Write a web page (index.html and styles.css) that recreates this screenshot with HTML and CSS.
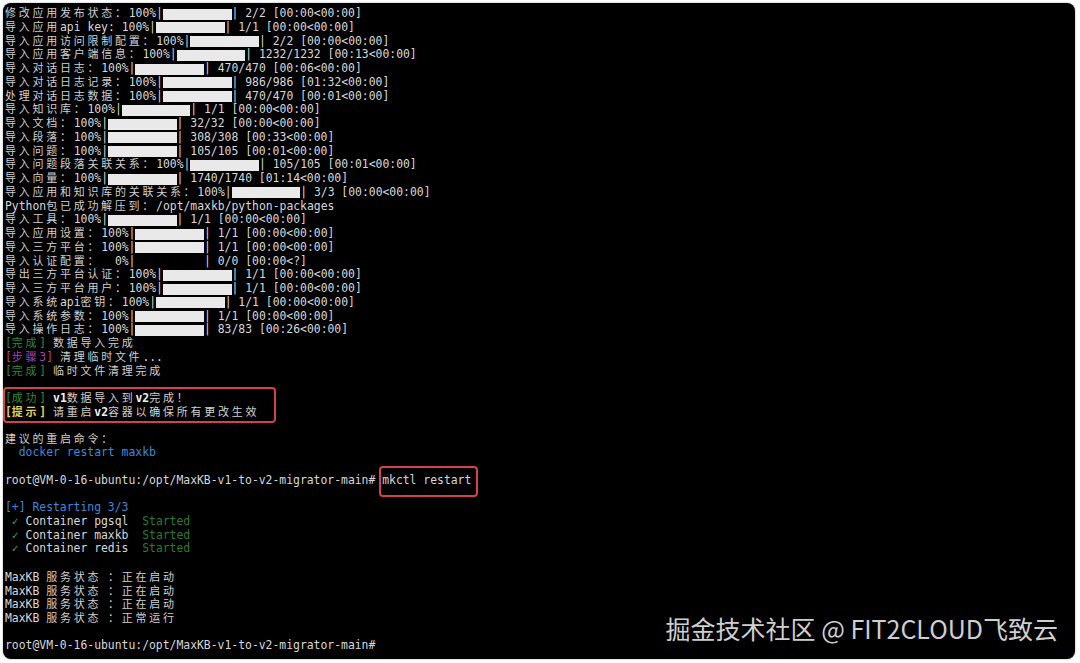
FILE: index.html
```html
<!DOCTYPE html>
<html lang="zh-CN">
<head>
    <meta charset="UTF-8">
    <meta name="viewport" content="width=device-width, initial-scale=1.0">
    <title>MaxKB v1 to v2 migrator</title>
    <link rel="stylesheet" href="styles.css">
</head>
<body>
    <div class="term">
        <div class="l"><span class="c">修改应用发布状态：</span>100%|<span class="bar"></span>| 2/2 [00:00&lt;00:00]</div>
        <div class="l"><span class="c">导入应用</span>api key: 100%|<span class="bar"></span>| 1/1 [00:00&lt;00:00]</div>
        <div class="l"><span class="c">导入应用访问限制配置：</span>100%|<span class="bar"></span>| 2/2 [00:00&lt;00:00]</div>
        <div class="l"><span class="c">导入应用客户端信息：</span>100%|<span class="bar"></span>| 1232/1232 [00:13&lt;00:00]</div>
        <div class="l"><span class="c">导入对话日志：</span>100%|<span class="bar"></span>| 470/470 [00:06&lt;00:00]</div>
        <div class="l"><span class="c">导入对话日志记录：</span>100%|<span class="bar"></span>| 986/986 [01:32&lt;00:00]</div>
        <div class="l"><span class="c">处理对话日志数据：</span>100%|<span class="bar"></span>| 470/470 [00:01&lt;00:00]</div>
        <div class="l"><span class="c">导入知识库：</span>100%|<span class="bar"></span>| 1/1 [00:00&lt;00:00]</div>
        <div class="l"><span class="c">导入文档：</span>100%|<span class="bar"></span>| 32/32 [00:00&lt;00:00]</div>
        <div class="l"><span class="c">导入段落：</span>100%|<span class="bar"></span>| 308/308 [00:33&lt;00:00]</div>
        <div class="l"><span class="c">导入问题：</span>100%|<span class="bar"></span>| 105/105 [00:01&lt;00:00]</div>
        <div class="l"><span class="c">导入问题段落关联关系：</span>100%|<span class="bar"></span>| 105/105 [00:01&lt;00:00]</div>
        <div class="l"><span class="c">导入向量：</span>100%|<span class="bar"></span>| 1740/1740 [01:14&lt;00:00]</div>
        <div class="l"><span class="c">导入应用和知识库的关联关系：</span>100%|<span class="bar"></span>| 3/3 [00:00&lt;00:00]</div>
        <div class="l">Python<span class="c">包已成功解压到：</span>/opt/maxkb/python-packages</div>
        <div class="l"><span class="c">导入工具：</span>100%|<span class="bar"></span>| 1/1 [00:00&lt;00:00]</div>
        <div class="l"><span class="c">导入应用设置：</span>100%|<span class="bar"></span>| 1/1 [00:00&lt;00:00]</div>
        <div class="l"><span class="c">导入三方平台：</span>100%|<span class="bar"></span>| 1/1 [00:00&lt;00:00]</div>
        <div class="l"><span class="c">导入认证配置：</span>  0%|<span class="bar empty"></span>| 0/0 [00:00&lt;?]</div>
        <div class="l"><span class="c">导出三方平台认证：</span>100%|<span class="bar"></span>| 1/1 [00:00&lt;00:00]</div>
        <div class="l"><span class="c">导入三方平台用户：</span>100%|<span class="bar"></span>| 1/1 [00:00&lt;00:00]</div>
        <div class="l"><span class="c">导入系统</span>api<span class="c">密钥：</span>100%|<span class="bar"></span>| 1/1 [00:00&lt;00:00]</div>
        <div class="l"><span class="c">导入系统参数：</span>100%|<span class="bar"></span>| 1/1 [00:00&lt;00:00]</div>
        <div class="l"><span class="c">导入操作日志：</span>100%|<span class="bar"></span>| 83/83 [00:26&lt;00:00]</div>
        <div class="l"><span class="ok">[<span class="c">完成</span>]</span> <span class="c">数据导入完成</span></div>
        <div class="l"><span class="step">[<span class="c">步骤</span>3]</span> <span class="c">清理临时文件</span>...</div>
        <div class="l"><span class="ok">[<span class="c">完成</span>]</span> <span class="c">临时文件清理完成</span></div>
        <div class="l"></div>

        <!-- highlighted result -->
        <div class="hl">
            <div class="l"><span class="ok">[<span class="c">成功</span>]</span> <b>v1</b><span class="c">数据导入到</span><b>v2</b><span class="c">完成！</span></div>
            <div class="l"><span class="tip">[<span class="c">提示</span>]</span> <span class="c">请重启</span><b>v2</b><span class="c">容器以确保所有更改生效</span></div>
        </div>

        <div class="l"></div>
        <div class="l"><span class="c">建议的重启命令：</span></div>
        <div class="l">  <span class="blue">docker restart maxkb</span></div>
        <div class="l"></div>
        <div class="l">root@VM-0-16-ubuntu:/opt/MaxKB-v1-to-v2-migrator-main# <span class="hl2">mkctl restart</span></div>
        <div class="l"></div>
        <div class="l"><span class="blue">[+] Restarting 3/3</span></div>
        <div class="l"> <span class="tick">✓</span> Container pgsql  <span class="started">Started</span></div>
        <div class="l"> <span class="tick">✓</span> Container maxkb  <span class="started">Started</span></div>
        <div class="l"> <span class="tick">✓</span> Container redis  <span class="started">Started</span></div>
        <div class="l"></div>
        <div class="l">MaxKB <span class="c">服务状态</span> <span class="c">：正在启动</span></div>
        <div class="l">MaxKB <span class="c">服务状态</span> <span class="c">：正在启动</span></div>
        <div class="l">MaxKB <span class="c">服务状态</span> <span class="c">：正在启动</span></div>
        <div class="l">MaxKB <span class="c">服务状态</span> <span class="c">：正常运行</span></div>
        <div class="l"></div>
        <div class="l">root@VM-0-16-ubuntu:/opt/MaxKB-v1-to-v2-migrator-main#</div>

        <div class="watermark">掘金技术社区 @ FIT2CLOUD飞致云</div>
    </div>
</body>
</html>
```

FILE: styles.css
```css
* {
    margin: 0;
    padding: 0;
    box-sizing: border-box;
}

body {
    width: 1080px;
    height: 663px;
    background: #fff;
    overflow: hidden;
}

/* Terminal window */
.term {
    position: relative;
    margin: 3px 0 0 3px;
    width: 1072px;
    height: 656px;
    padding: 3px 0 0 2px;
    background: #000;
    border-radius: 8px;
    box-shadow: 0 0 2px rgba(0, 0, 0, 0.4);
    color: #d8d8d8;
    font-family: "DejaVu Sans Mono", "Noto Sans CJK SC", monospace;
    font-size: 11.4px;
}

/* one terminal row */
.l {
    height: 13.76px;
    line-height: 13.76px;
    white-space: pre;
}

/* CJK runs take two cells per glyph */
.c {
    font-family: "Noto Sans CJK SC", sans-serif;
    font-size: 11px;
    letter-spacing: 2.74px;
    color: #d0d0d0;
}

.l b {
    font-weight: bold;
    color: #f0f0f0;
}

/* tqdm progress bar */
.bar {
    display: inline-block;
    width: 10ch;
    height: 11px;
    background: #e9e9e9;
    vertical-align: -2.5px;
}

.bar.empty {
    background: transparent;
}

.ok,
.ok .c {
    color: #2c8a3c;
}

.step,
.step .c {
    color: #b23fb4;
}

.tip,
.tip .c {
    color: #e6d35a;
    font-weight: bold;
}

.blue {
    color: #3d88d8;
}

.tick {
    color: #3ea040;
}

.started {
    color: #2a7a2e;
}

/* red annotation boxes */
.hl {
    position: relative;
}

.hl::after {
    content: '';
    position: absolute;
    left: -2px;
    top: -4.5px;
    bottom: -4px;
    width: 269px;
    border: 2px solid #d2424a;
    border-radius: 4px;
}

.hl2 {
    position: relative;
}

.hl2::after {
    content: '';
    position: absolute;
    left: -3px;
    right: -7px;
    top: -6.5px;
    bottom: -10px;
    border: 2px solid #d2424a;
    border-radius: 4px;
}

.watermark {
    position: absolute;
    right: 17px;
    bottom: 16px;
    line-height: 30px;
    font-family: "Noto Sans CJK SC", sans-serif;
    font-size: 25px;
    color: #cfcfcf;
    white-space: nowrap;
}
```
